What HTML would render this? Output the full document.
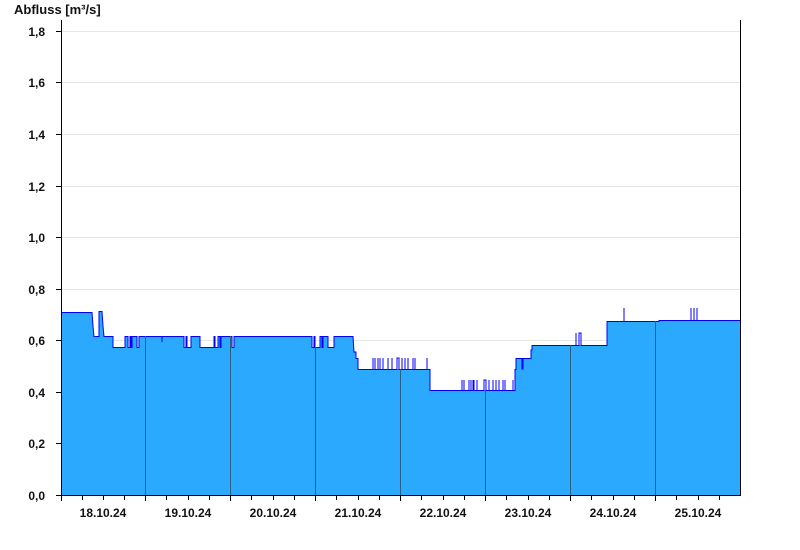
<!DOCTYPE html>
<html><head><meta charset="utf-8"><style>
html,body{margin:0;padding:0;background:#fff;}
svg{display:block;}
text{font-family:"Liberation Sans",Arial,sans-serif;font-weight:bold;font-size:12px;fill:#111;}
</style></head><body>
<svg width="800" height="550" viewBox="0 0 800 550" xmlns="http://www.w3.org/2000/svg">
<text x="14" y="14" style="font-size:13px">Abfluss [m³/s]</text>
<g stroke="#e6e6e6" stroke-width="1" shape-rendering="crispEdges">
<line x1="61" y1="31.5" x2="740" y2="31.5"/>
<line x1="61" y1="82.5" x2="740" y2="82.5"/>
<line x1="61" y1="134.5" x2="740" y2="134.5"/>
<line x1="61" y1="186.5" x2="740" y2="186.5"/>
<line x1="61" y1="237.5" x2="740" y2="237.5"/>
<line x1="61" y1="289.5" x2="740" y2="289.5"/>
<line x1="61" y1="340.5" x2="740" y2="340.5"/>
<line x1="61" y1="392.5" x2="740" y2="392.5"/>
<line x1="61" y1="443.5" x2="740" y2="443.5"/>
</g>
<path fill="#2aa9ff" stroke="none" d="M61,495 L61,312 H92 L93,326 L94,336 H99 V311 H102 L103,326 L104,336 H113 V347 H125 V336 H128 V347 H130 V336 H131 V347 H132 V336 H137 V347 H139 V336 H184 V347 H186 V336 H187 V347 H191 V336 H200 V347 H214 V336 H215 V347 H218 V336 H220 V347 H221 V336 H232 V347 H234 V336 H312 V347 H314 V336 H315 V347 H320 V336 H322 V347 H323 V336 H328 V347 H334 V336 H353 L354,352 H356 V358 H358 V369 H430 V390 H515 V369 H516 V358 H522 V369 H523 V358 H531 V350 H532 V345 H607 V321 H659 V320 H740 V495 Z"/>
<path fill="none" stroke="#0000ff" stroke-width="1" d="M61,312.5 H92 L93,326 L94,336.5 H99 V311.5 H102 L103,326 L104,336.5 H113 V347.5 H125 V336.5 H128 V347.5 H130 V336.5 H131 V347.5 H132 V336.5 H137 V347.5 H139 V336.5 H162 V342 V336.5 H184 V347.5 H186 V336.5 H187 V347.5 H191 V336.5 H200 V347.5 H214 V336.5 H215 V347.5 H218 V336.5 H220 V347.5 H221 V336.5 H232 V347.5 H234 V336.5 H312 V347.5 H314 V336.5 H315 V347.5 H320 V336.5 H322 V347.5 H323 V336.5 H328 V347.5 H334 V336.5 H353 L354,352 H356 V358.5 H358 V369.5 H373 V358 V369.5 H375 V358 V369.5 H378 V358 V369.5 H380 V358 V369.5 H383 V358 V369.5 H388 V358 V369.5 H392 V358 V369.5 H397 V358 H399 V369.5 H402 V358 V369.5 H405 V358 V369.5 H408 V358 V369.5 H413 V358 V369.5 H415 V358 V369.5 H427 V358 V369.5 H430 V390.5 H462 V380 V390.5 H464 V380 V390.5 H469 V380 V390.5 H471 V380 V390.5 H473 V380 V390.5 H474 V380 V390.5 H477 V380 V390.5 H484 V380 H486 V390.5 H489 V380 V390.5 H493 V380 V390.5 H496 V380 V390.5 H499 V380 V390.5 H503 V380 V390.5 H505 V380 V390.5 H513 V380 V390.5 H515 V369.5 H516 V358.5 H522 V369 H523 V358.5 H531 V350 H532 V345.5 H576 V333 V345.5 H579 V333 H581 V345.5 H607 V321.5 H624 V308 V321.5 H659 V320.5 H691 V308 V320.5 H694 V308 V320.5 H697 V308 V320.5 H740"/>
<g stroke="#2b5f85" stroke-width="1" shape-rendering="crispEdges">
<line x1="145.5" y1="336" x2="145.5" y2="495"/>
<line x1="230.5" y1="336" x2="230.5" y2="495"/>
<line x1="315.5" y1="347" x2="315.5" y2="495"/>
<line x1="400.5" y1="369" x2="400.5" y2="495"/>
<line x1="485.5" y1="390" x2="485.5" y2="495"/>
<line x1="570.5" y1="345" x2="570.5" y2="495"/>
<line x1="655.5" y1="321" x2="655.5" y2="495"/>
</g>
<g stroke="#000" stroke-width="1" shape-rendering="crispEdges">
<line x1="61.5" y1="20" x2="61.5" y2="495"/>
<line x1="740.5" y1="20" x2="740.5" y2="495"/>
<line x1="61" y1="495.5" x2="741" y2="495.5"/>
<path d="M56,31.5H61M56,82.5H61M56,134.5H61M56,186.5H61M56,237.5H61M56,289.5H61M56,340.5H61M56,392.5H61M56,443.5H61M56,495.5H61"/>
<path d="M61.5,495V501M82.5,495V500M103.5,495V500M124.5,495V500M145.5,495V501M166.5,495V500M188.5,495V500M209.5,495V500M230.5,495V501M251.5,495V500M273.5,495V500M294.5,495V500M315.5,495V501M336.5,495V500M358.5,495V500M379.5,495V500M400.5,495V501M421.5,495V500M443.5,495V500M464.5,495V500M485.5,495V501M506.5,495V500M528.5,495V500M549.5,495V500M570.5,495V501M591.5,495V500M613.5,495V500M634.5,495V500M655.5,495V501M676.5,495V500M698.5,495V500M719.5,495V500"/>
</g>
<g text-anchor="end">
<text x="45" y="36">1,8</text>
<text x="45" y="87">1,6</text>
<text x="45" y="139">1,4</text>
<text x="45" y="191">1,2</text>
<text x="45" y="242">1,0</text>
<text x="45" y="294">0,8</text>
<text x="45" y="345">0,6</text>
<text x="45" y="397">0,4</text>
<text x="45" y="448">0,2</text>
<text x="45" y="500">0,0</text>
</g>
<g text-anchor="middle">
<text x="103" y="517">18.10.24</text>
<text x="188" y="517">19.10.24</text>
<text x="273" y="517">20.10.24</text>
<text x="358" y="517">21.10.24</text>
<text x="443" y="517">22.10.24</text>
<text x="528" y="517">23.10.24</text>
<text x="613" y="517">24.10.24</text>
<text x="698" y="517">25.10.24</text>
</g>
</svg>
</body></html>
